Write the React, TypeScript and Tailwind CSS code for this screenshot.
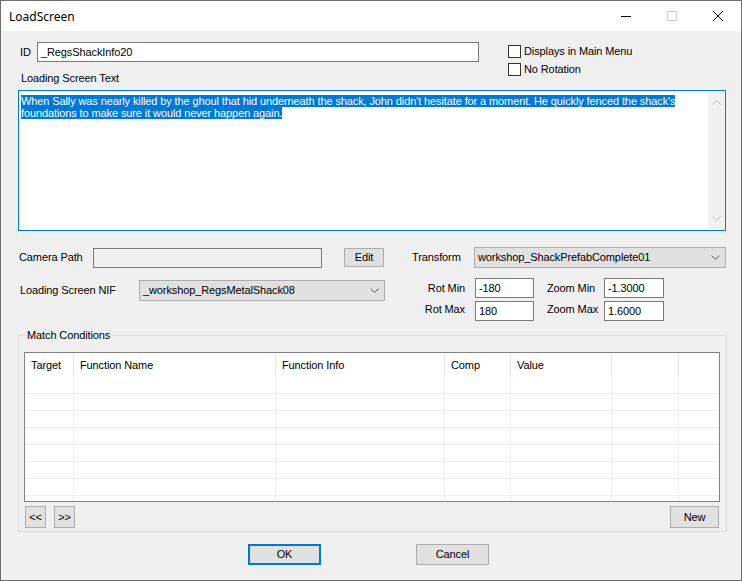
import React from 'react';

const FONT = { fontFamily: '"Liberation Sans", Arial, sans-serif' };

const columns = [
  { name: 'Target', w: 'w-[49px]' },
  { name: 'Function Name', w: 'w-[202px]' },
  { name: 'Function Info', w: 'w-[169px]' },
  { name: 'Comp', w: 'w-[66px]' },
  { name: 'Value', w: 'w-[101px]' },
  { name: '', w: 'w-[67px]' },
];

const Chevron: React.FC<{ up?: boolean; color?: string }> = ({ up, color = '#606060' }) => (
  <svg width="9" height="5" viewBox="0 0 9 5">
    <polyline
      points={up ? '0.5,4.5 4.5,0.5 8.5,4.5' : '0.5,0.5 4.5,4.5 8.5,0.5'}
      fill="none"
      stroke={color}
      strokeWidth="1"
    />
  </svg>
);

const TextBox: React.FC<{ value: string; w: string }> = ({ value, w }) => (
  <div className={`${w} h-[20px] border border-[#7a7a7a] bg-white pl-[3px] flex items-center`}>
    {value}
  </div>
);

const Combo: React.FC<{ value: string; w: string }> = ({ value, w }) => (
  <div className={`${w} h-[21px] border border-[#adadad] bg-[#e1e1e1] pl-[3px] pr-[5px] flex items-center justify-between`}>
    <span>{value}</span>
    <Chevron />
  </div>
);

const Button: React.FC<{ label: string; w: string; h?: string; focused?: boolean }> = ({ label, w, h = 'h-[22px]', focused }) => (
  <button
    className={`${w} ${h} bg-[#e1e1e1] flex items-center justify-center ${
      focused ? 'border-2 border-[#0078d7]' : 'border border-[#adadad]'
    }`}
  >
    {label}
  </button>
);

const CheckBox: React.FC<{ label: string }> = ({ label }) => (
  <div className="flex items-center h-[13px] gap-[3px]">
    <div className="w-[13px] h-[13px] border border-[#333333] bg-white" />
    <span>{label}</span>
  </div>
);

export default function App() {
  return (
    <div
      className="w-[742px] h-[581px] border border-[#6f6f6f] bg-[#f0f0f0] flex flex-col text-[11px] tracking-[-0.11px] text-black leading-[13px]"
      style={FONT}
    >
      {/* title bar */}
      <div className="h-[30px] bg-white flex items-center shrink-0 tracking-normal">
        <span className="pl-[8px] text-[12px] flex-1" style={{ fontFamily: '"Noto Sans", "Open Sans", sans-serif' }}>
          LoadScreen
        </span>
        <div className="w-[46px] h-full flex items-center justify-center">
          <svg width="10" height="10" viewBox="0 0 10 10">
            <line x1="0" y1="5.5" x2="10" y2="5.5" stroke="#000" strokeWidth="1" />
          </svg>
        </div>
        <div className="w-[46px] h-full flex items-center justify-center">
          <svg width="10" height="10" viewBox="0 0 10 10">
            <rect x="0.5" y="0.5" width="9" height="9" fill="none" stroke="#cccccc" strokeWidth="1" />
          </svg>
        </div>
        <div className="w-[46px] h-full flex items-center justify-center">
          <svg width="10" height="10" viewBox="0 0 10 10">
            <path d="M0 0 L10 10 M10 0 L0 10" stroke="#000" strokeWidth="1" />
          </svg>
        </div>
      </div>

      {/* body */}
      <div className="flex flex-col pt-[11px]">
        <div className="flex items-start">
          <div className="flex flex-col">
            <div className="flex items-center pl-[19px]">
              <span className="w-[17px]">ID</span>
              <TextBox value="_RegsShackInfo20" w="w-[442px]" />
            </div>
            <div className="pl-[20px] mt-[10px]">Loading Screen Text</div>
          </div>
          <div className="flex flex-col gap-[5px] ml-[29px] mt-[3px]">
            <CheckBox label="Displays in Main Menu" />
            <CheckBox label="No Rotation" />
          </div>
        </div>

        {/* loading screen text */}
        <div className="ml-[17px] mt-[5px] w-[708px] h-[141px] border border-[#0078d7] bg-white flex">
          <div className="flex-1 pl-[2px] pt-[4px] leading-[12px]">
            <div className="w-fit bg-[#0078d7] text-white">
              When Sally was nearly killed by the ghoul that hid underneath the shack, John didn't hesitate for a moment. He quickly fenced the shack's
            </div>
            <div className="w-fit bg-[#0078d7] text-white">foundations to make sure it would never happen again.</div>
          </div>
          <div className="w-[17px] my-[1px] bg-[#f0f0f0] flex flex-col items-center justify-between py-[8px]">
            <Chevron up color="#c0c0c0" />
            <Chevron color="#c0c0c0" />
          </div>
        </div>

        {/* camera path / transform */}
        <div className="flex items-center mt-[16px] h-[21px]">
          <span className="ml-[18px] w-[74px]">Camera Path</span>
          <div className="w-[229px] h-[20px] border border-[#7a7a7a] bg-[#f0f0f0]" />
          <div className="ml-[22px]">
            <Button label="Edit" w="w-[40px]" h="h-[19px]" />
          </div>
          <span className="ml-[28px] w-[62px]">Transform</span>
          <Combo value="workshop_ShackPrefabComplete01" w="w-[252px]" />
        </div>

        {/* nif / rot / zoom */}
        <div className="flex items-start mt-[10px]">
          <div className="flex items-center mt-[2px]">
            <span className="ml-[19px] w-[119px]">Loading Screen NIF</span>
            <Combo value="_workshop_RegsMetalShack08" w="w-[246px]" />
          </div>
          <div className="ml-[27px] flex flex-col gap-[3px]">
            <div className="flex items-center">
              <span className="w-[53px] text-right">Rot Min</span>
              <div className="ml-[10px]">
                <TextBox value="-180" w="w-[59px]" />
              </div>
              <span className="ml-[13px] w-[57px]">Zoom Min</span>
              <TextBox value="-1.3000" w="w-[60px]" />
            </div>
            <div className="flex items-center">
              <span className="w-[53px] text-right pb-[4px]">Rot Max</span>
              <div className="ml-[10px]">
                <TextBox value="180" w="w-[59px]" />
              </div>
              <span className="ml-[13px] w-[57px] pb-[4px]">Zoom Max</span>
              <TextBox value="1.6000" w="w-[60px]" />
            </div>
          </div>
        </div>

        {/* match conditions */}
        <div className="ml-[17px] mt-[14px] w-[709px] h-[197px] border border-[#dcdcdc] flex flex-col">
          <div className="-mt-[7px] ml-[7px] w-fit px-[1px] bg-[#f0f0f0]">Match Conditions</div>
          <div className="ml-[5px] mt-[10px] w-[696px] h-[150px] border border-[#828282] bg-white flex flex-col overflow-hidden">
            <div className="flex h-[24px] shrink-0">
              {columns.map((c, i) => (
                <div key={i} className={`${c.w} h-full border-r border-[#e5e5e5] pl-[6px] flex items-center`}>
                  {c.name}
                </div>
              ))}
            </div>
            {Array.from({ length: 8 }).map((_, r) => (
              <div key={r} className="flex h-[17px] shrink-0 border-b border-[#f0f0f0]">
                {columns.map((c, i) => (
                  <div key={i} className={`${c.w} h-full border-r border-[#f0f0f0]`} />
                ))}
              </div>
            ))}
          </div>
          <div className="flex items-center mt-[4px] ml-[6px] mr-[7px]">
            <Button label="<<" w="w-[21px]" />
            <div className="ml-[8px]">
              <Button label=">>" w="w-[21px]" />
            </div>
            <div className="ml-auto">
              <Button label="New" w="w-[49px]" />
            </div>
          </div>
        </div>

        {/* ok / cancel */}
        <div className="flex mt-[12px] ml-[247px] gap-[95px]">
          <Button label="OK" w="w-[73px]" h="h-[21px]" focused />
          <Button label="Cancel" w="w-[73px]" h="h-[21px]" />
        </div>
      </div>
    </div>
  );
}
